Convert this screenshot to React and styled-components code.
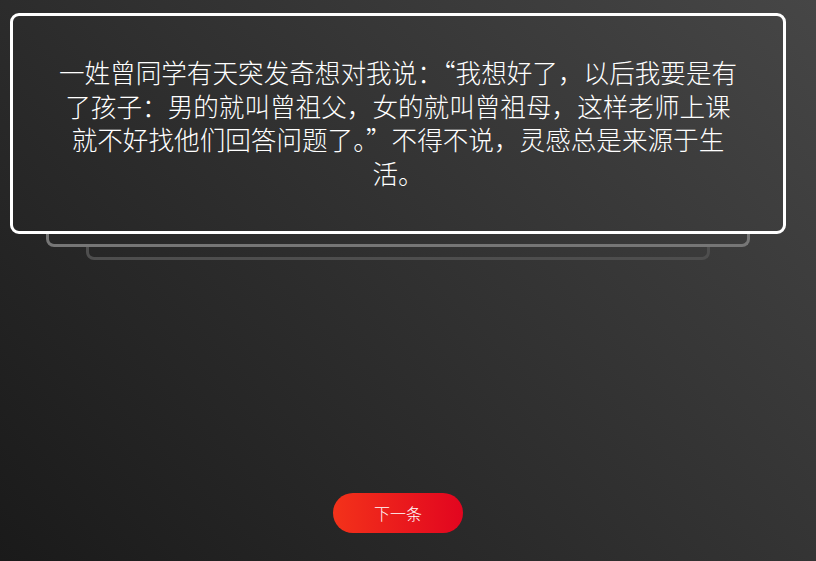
import React from 'react'
import styled, { createGlobalStyle } from 'styled-components'

const GlobalStyle = createGlobalStyle`
  html, body {
    margin: 0;
    padding: 0;
  }

  body {
    font-family: "Noto Sans CJK SC", "Noto Sans", sans-serif;
    background: linear-gradient(45deg, #1a1a1a, #464646);
    min-height: 100vh;
  }
`

const Page = styled.div`
  width: 796px;
  height: 561px;
  padding-top: 13px;
  box-sizing: border-box;
  display: flex;
  flex-direction: column;
  align-items: center;
`

const Deck = styled.div`
  position: relative;
  width: 776px;
`

const Card = styled.div`
  position: relative;
  z-index: 2;
  box-sizing: border-box;
  border: 3px solid #fff;
  border-radius: 9px;
  padding: 39px 41px 42px;
  color: #fff;
  font-size: 25.6px;
  font-weight: 300;
  line-height: 33.6px;
  text-align: center;
`

// the faded cards peeking out under the front one
const Layer = styled.div`
  position: absolute;
  left: ${props => props.inset}px;
  right: ${props => props.inset}px;
  top: calc(100% + ${props => props.offset}px);
  height: 13px;
  box-sizing: border-box;
  border: 3px solid ${props => props.color};
  border-top: none;
  border-radius: 0 0 8px 8px;
  z-index: 1;
`

const Actions = styled.div`
  margin-top: 259px;
  display: flex;
  justify-content: center;
`

const NextButton = styled.button`
  width: 130px;
  height: 40px;
  border: none;
  border-radius: 20px;
  background: linear-gradient(90deg, #f3321a, #e2051f);
  color: #fff;
  font-family: "Noto Sans CJK SC", sans-serif;
  font-size: 16px;
  font-weight: 300;
  cursor: pointer;
`

const joke = '一姓曾同学有天突发奇想对我说：“我想好了，以后我要是有了孩子：男的就叫曾祖父，女的就叫曾祖母，这样老师上课就不好找他们回答问题了。”不得不说，灵感总是来源于生活。'

export default function App() {
  return (
    <>
      <GlobalStyle/>
      <Page>
        <Deck>
          <Card>{joke}</Card>
          <Layer inset={36} offset={0} color="#767676"/>
          <Layer inset={76} offset={13} color="#4e4e4e"/>
        </Deck>
        <Actions>
          <NextButton>下一条</NextButton>
        </Actions>
      </Page>
    </>
  )
}
